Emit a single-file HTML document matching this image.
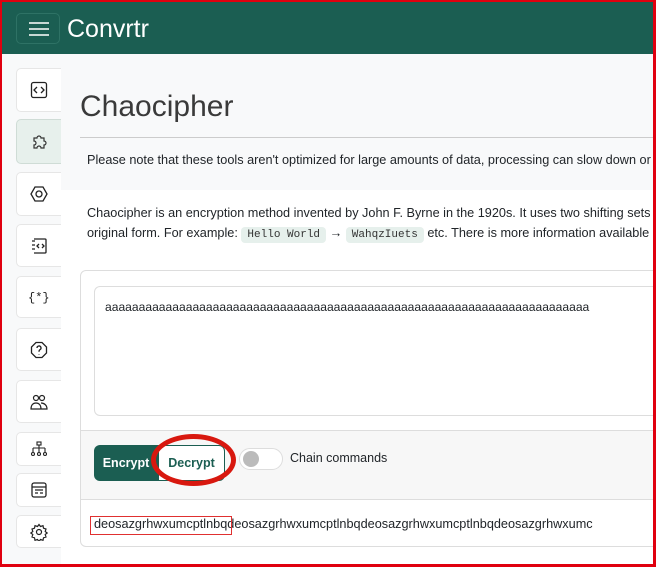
<!DOCTYPE html>
<html><head><style>
*{box-sizing:border-box;margin:0;padding:0}
body{width:656px;height:567px;overflow:hidden;font-family:"Liberation Sans",sans-serif;background:#f8f9fa;position:relative;color:#212529}
.hdr{position:absolute;left:0;top:0;width:656px;height:54px;background:#1b5e52}
.hb{position:absolute;left:16px;top:13px;width:44px;height:31px;border:1px solid #2e7265;border-radius:5px}
.hb i{position:absolute;left:12px;width:20px;height:2px;background:#c8d8d4}
.logo{position:absolute;left:67px;top:15px;color:#fff;font-size:25px}
.sb{position:absolute;left:16px;width:50px;background:#fff;border:1px solid #e6e6e6;border-radius:5px}
.sb svg{position:absolute;left:13px;top:50%;margin-top:-9px}
.main{position:absolute;left:61px;top:68px;width:595px;height:499px;background:#fff;z-index:1}
.top{position:absolute;left:61px;top:68px;width:595px;height:122px;background:#f8f9fa;z-index:1}
.z{position:absolute;z-index:2}
h1{left:80px;top:90px;font-weight:normal;font-size:30px;color:#3a3a3a}
.hr{left:80px;top:137px;width:576px;height:1px;background:#ccc}
.p{left:87px;font-size:12.7px;white-space:nowrap}
code{font-family:"Liberation Mono",monospace;font-size:11px;background:#e6f0ec;padding:2px 6px;border-radius:4px;color:#333}
.card{left:80px;top:270px;width:590px;height:277px;border:1px solid #ddd;border-radius:6px;background:#fff;overflow:hidden}
.ta{position:absolute;left:13px;top:15px;width:590px;height:130px;border:1px solid #ddd;border-radius:6px;padding:13px 10px;font-size:12.1px}
.ft{position:absolute;left:0;top:159px;width:590px;height:70px;background:#f7f7f7;border-top:1px solid #ddd;border-bottom:1px solid #ddd}
</style></head><body>
<div class="hdr"><div class="hb"><i style="top:8px"></i><i style="top:14px"></i><i style="top:20px"></i></div><div class="logo">Convrtr</div></div>
<div class="main"></div><div class="top"></div>
<div class="sb" style="top:68px;height:44px"><svg width="18" height="18" viewBox="0 0 18 18" fill="none" stroke="#222" stroke-width="1.3"><rect x="1.5" y="1.5" width="15" height="15" rx="2"/><path d="M7 6l-3 3 3 3M11 6l3 3-3 3"/></svg></div>
<div class="sb" style="top:119px;height:45px;background:#e7f0ec;border-color:#cfdcd6"><svg width="18" height="18" viewBox="0 0 18 18" fill="none" stroke="#333" stroke-width="1.2"><path d="M4 5h3a2 2 0 1 1 4 0h3v3a2 2 0 1 1 0 4v3h-3a2 2 0 1 0-4 0H4v-3a2 2 0 1 0 0-4z"/></svg></div>
<div class="sb" style="top:172px;height:44px"><svg width="18" height="18" viewBox="0 0 18 18" fill="none" stroke="#222" stroke-width="1.3"><path d="M5 2h8l4 7-4 7H5L1 9z"/><circle cx="9" cy="9" r="3"/></svg></div>
<div class="sb" style="top:224px;height:43px"><svg width="18" height="18" viewBox="0 0 18 18" fill="none" stroke="#222" stroke-width="1.3"><path d="M4 2h11a1 1 0 0 1 1 1v12a1 1 0 0 1-1 1H4M2 4h3M2 8h3M2 12h3M9 7l-2 2 2 2M12 7l2 2-2 2"/></svg></div>
<div class="sb" style="top:276px;height:42px"><svg width="22" height="18" viewBox="0 0 22 18" style="left:11px"><text x="0" y="13" font-size="12" font-family="Liberation Mono" fill="#222">{*}</text></svg></div>
<div class="sb" style="top:328px;height:43px"><svg width="18" height="18" viewBox="0 0 18 18" fill="none" stroke="#222" stroke-width="1.3"><path d="M6 1.5h6l4.5 4.5v6L12 16.5H6L1.5 12V6z"/><path d="M7 7a2 2 0 1 1 3 1.7c-1 .5-1 1-1 2M9 13v.5"/></svg></div>
<div class="sb" style="top:380px;height:43px"><svg width="18" height="18" viewBox="0 0 18 18" fill="none" stroke="#222" stroke-width="1.2"><circle cx="6" cy="5" r="2.5"/><circle cx="12" cy="5" r="2.5"/><path d="M1 16c0-4 2-6 5-6s5 2 5 6zM11 10c3 0 6 2 6 6h-6"/></svg></div>
<div class="sb" style="top:432px;height:34px"><svg width="18" height="18" viewBox="0 0 18 18" fill="none" stroke="#222" stroke-width="1.1"><rect x="7" y="2" width="4" height="3"/><path d="M9 5v3M3 8h12M3 8v4M9 8v4M15 8v4"/><circle cx="3" cy="14" r="1.5"/><circle cx="9" cy="14" r="1.5"/><circle cx="15" cy="14" r="1.5"/></svg></div>
<div class="sb" style="top:473px;height:34px"><svg width="18" height="18" viewBox="0 0 18 18" fill="none" stroke="#222" stroke-width="1.3"><rect x="2" y="2" width="14" height="14" rx="2"/><path d="M2 6h14M5 9h8M5 12h3M10 12h3"/></svg></div>
<div class="sb" style="top:515px;height:33px"><svg width="18" height="18" viewBox="0 0 18 18" fill="none" stroke="#222" stroke-width="1.2"><circle cx="9" cy="9" r="2.5"/><path d="M9 1.5l1.5 2 2.5-.8.5 2.5 2.5.8-.8 2.5 2 1.5-2 1.5.8 2.5-2.5.8-.5 2.5-2.5-.8-1.5 2-1.5-2-2.5.8-.5-2.5-2.5-.8.8-2.5-2-1.5 2-1.5-.8-2.5 2.5-.8.5-2.5 2.5.8z"/></svg></div>
<h1 class="z">Chaocipher</h1>
<div class="hr z"></div>
<div class="p z" style="top:153px">Please note that these tools aren't optimized for large amounts of data, processing can slow down or</div>
<div class="p z" style="top:206px">Chaocipher is an encryption method invented by John F. Byrne in the 1920s. It uses two shifting sets of</div>
<div class="p z" style="top:226px">original form. For example: <code>Hello World</code> → <code>WahqzIuets</code> etc. There is more information available o</div>
<div class="card z">
<div class="ta">aaaaaaaaaaaaaaaaaaaaaaaaaaaaaaaaaaaaaaaaaaaaaaaaaaaaaaaaaaaaaaaaaaaaaaaa</div>
<div class="ft">
<div style="position:absolute;left:13px;top:14px;width:64px;height:36px;background:#1b5e52;border-radius:6px 0 0 6px;color:#fff;font-weight:bold;font-size:12.5px;line-height:36px;text-align:center">Encrypt</div>
<div style="position:absolute;left:77px;top:14px;width:67px;height:36px;background:#fff;border:1px solid #1b5e52;border-radius:0 6px 6px 0;color:#1b5e52;font-size:12.5px;font-weight:bold;line-height:34px;text-align:center">Decrypt</div>
<div style="position:absolute;left:158px;top:17px;width:44px;height:22px;border:1px solid #ddd;border-radius:11px;background:#fff"><div style="position:absolute;left:3px;top:2px;width:16px;height:16px;border-radius:50%;background:#bbb"></div></div>
<div style="position:absolute;left:209px;top:20px;font-size:12.5px">Chain commands</div>
</div>
<div style="position:absolute;left:13px;top:246px;font-size:12.7px;white-space:nowrap">deosazgrhwxumcptlnbqdeosazgrhwxumcptlnbqdeosazgrhwxumcptlnbqdeosazgrhwxumc</div>
</div>
<div class="z" style="left:90px;top:516px;width:142px;height:19px;border:1px solid #e03030"></div>
<div class="z" style="left:151px;top:434px;width:85px;height:52px;border:5px solid #d8180f;border-radius:50%"></div>
<div style="position:absolute;z-index:5;left:0;top:0;width:656px;height:567px;border:2px solid #e0000f;border-right-width:3px;border-bottom-width:3px"></div>
</body></html>
